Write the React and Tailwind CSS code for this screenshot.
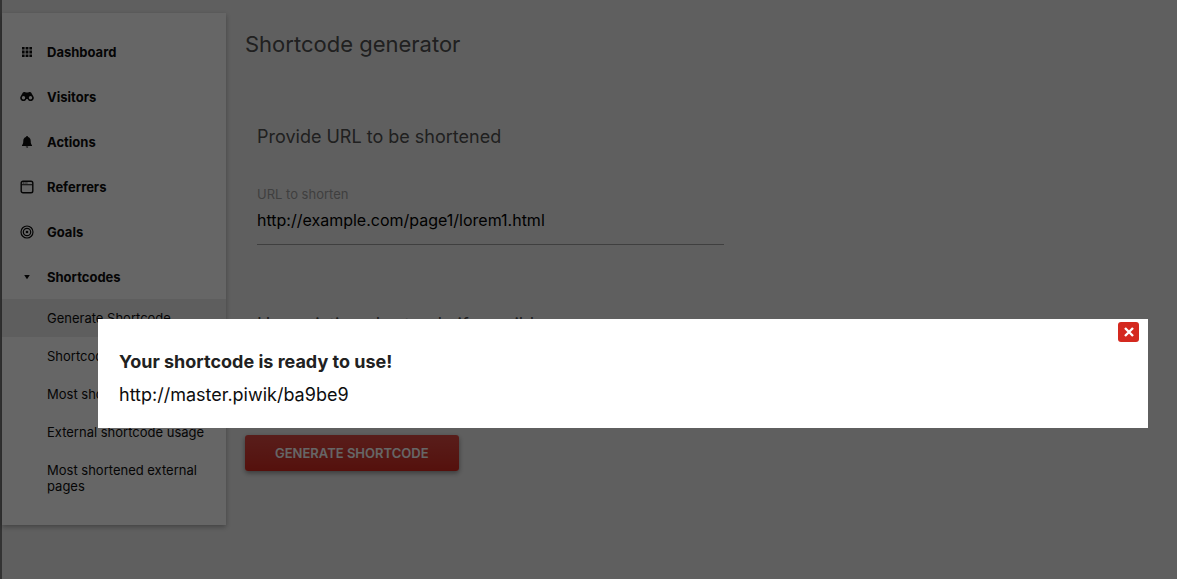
const items = [
  { label: 'Dashboard', icon: 'grid' },
  { label: 'Visitors', icon: 'binoculars' },
  { label: 'Actions', icon: 'bell' },
  { label: 'Referrers', icon: 'window' },
  { label: 'Goals', icon: 'target' },
  { label: 'Shortcodes', icon: 'caret' },
];

const subItems = [
  'Generate Shortcode',
  'Shortcodes list',
  'Most shortened pages',
  'External shortcode usage',
  'Most shortened external pages',
];

const shapes = {
  grid: (
    <path d="M2 2h2.6v2.6H2zM5.6 2h2.8v2.6H5.6zM9.4 2H12v2.6H9.4zM2 5.6h2.6v2.8H2zM5.6 5.6h2.8v2.8H5.6zM9.4 5.6H12v2.8H9.4zM2 9.4h2.6V12H2zM5.6 9.4h2.8V12H5.6zM9.4 9.4H12V12H9.4z" />
  ),
  binoculars: (
    <path
      fillRule="evenodd"
      d="M2.600 3C3.200 1.800 5.200 1.600 6 2.500h2c.8-.9 2.800-.7 3.400.5l1.700 2.900A3.200 3.200 0 1 1 7.600 9H6.400A3.200 3.200 0 1 1 .9 5.900zM3.500 6.100a1.700 1.700 0 1 0 0 3.400 1.700 1.700 0 0 0 0-3.400zM10.500 6.100a1.700 1.700 0 1 0 0 3.400 1.700 1.700 0 0 0 0-3.400z"
    />
  ),
  bell: (
    <path d="M7 1c.6 0 1 .4 1 .9 1.800.5 2.700 2 2.700 3.900 0 2.500.5 3.600 1.300 4.400v.8H2v-.8c.8-.8 1.300-1.900 1.300-4.400C3.300 3.900 4.200 2.400 6 1.900 6 1.400 6.400 1 7 1zM5.800 11.600h2.400c0 .8-.5 1.200-1.200 1.200s-1.200-.4-1.200-1.200z" />
  ),
  window: (
    <>
      <rect x="1.200" y="1.200" width="11.600" height="11.600" rx="1.800" fill="none" stroke="currentColor" strokeWidth="1.400" />
      <path d="M1.500 4.300h11v1h-11zM2.800 2.600h1v1h-1zM4.600 2.600h1v1h-1zM6.400 2.600h1v1h-1z" />
    </>
  ),
  target: (
    <>
      <g fill="none" stroke="currentColor" strokeWidth="1.200">
        <circle cx="7" cy="7" r="6" />
        <circle cx="7" cy="7" r="3.700" />
      </g>
      <circle cx="7" cy="7" r="1.300" />
    </>
  ),
  caret: <path d="M4.200 5h5.600L7 9.200z" />,
};

function Icon({ name }) {
  return (
    <svg viewBox="0 0 14 14" className="size-3.5 shrink-0" fill="currentColor" aria-hidden="true">
      {shapes[name]}
    </svg>
  );
}

function Sidebar() {
  return (
    <nav className="w-56 shrink-0 bg-white pt-4 pb-5 text-[13px] text-[#0d0d0d] shadow-[0_2px_5px_rgba(0,0,0,0.3)]">
      <ul>
        {items.map((item) => (
          <li key={item.label}>
            <a href="#" className="flex h-[45px] items-center gap-[13px] pl-[18px] font-bold">
              <Icon name={item.icon} />
              <span className="pt-0.5">{item.label}</span>
            </a>
          </li>
        ))}
      </ul>
      <ul>
        {subItems.map((label, i) => (
          <li key={label}>
            <a
              href="#"
              className={
                i === 0
                  ? 'block bg-[#ebebeb] py-[11px] pr-5 pl-[45px] leading-4'
                  : 'block py-[11px] pr-5 pl-[45px] leading-4'
              }
            >
              {label}
            </a>
          </li>
        ))}
      </ul>
    </nav>
  );
}

function Generator() {
  return (
    <main className="flex-1 pt-[15px]">
      <h1 className="text-[22px] leading-8 text-[#505050]">Shortcode generator</h1>
      <form className="mt-[65px]">
        <div className="max-w-[491px] px-3">
          <h2 className="text-lg leading-6 text-[#505050]">Provide URL to be shortened</h2>
          <label htmlFor="url" className="mt-[35px] block text-[13px] leading-5 text-[#9e9e9e]">
            URL to shorten
          </label>
          <input
            id="url"
            type="text"
            defaultValue="http://example.com/page1/lorem1.html"
            className="block h-[41px] w-full border-b border-[#9e9e9e] pb-[9px] text-base text-black outline-none"
          />
          <h2 className="mt-[68px] text-lg leading-6 text-[#505050]">Use existing shortcode if possible</h2>
        </div>
        <button
          type="button"
          className="mt-[98px] h-9 rounded-[3px] bg-linear-to-b from-[#dd4a43] to-[#d4291f] px-[30px] pt-0.5 text-[13px] font-semibold text-white shadow-[0_2px_5px_rgba(0,0,0,0.4)]"
        >
          GENERATE SHORTCODE
        </button>
      </form>
    </main>
  );
}

function ShortcodeDialog() {
  return (
    <div className="fixed inset-0 flex items-start bg-black/60 pt-[319px] pr-[29px] pl-[98px]">
      <section role="dialog" aria-labelledby="dialog-title" className="relative flex-1 bg-white px-[21px] pt-[31px] pb-5">
        <button
          type="button"
          aria-label="Close"
          className="absolute top-[3px] right-[9px] flex h-5 w-[21px] items-center justify-center rounded-[3px] bg-[#d4291f] text-white"
        >
          <svg viewBox="0 0 10 10" className="size-2.5" fill="none" stroke="currentColor" strokeWidth="2.400" aria-hidden="true">
            <path d="M1 1l8 8M9 1L1 9" />
          </svg>
        </button>
        <h2 id="dialog-title" className="text-lg leading-6 font-bold text-[#212121]">
          Your shortcode is ready to use!
        </h2>
        <p className="mt-[7px] text-lg leading-[27px] text-[#0d0d0d]">http://master.piwik/ba9be9</p>
      </section>
    </div>
  );
}

export default function App() {
  return (
    <div className="min-h-screen border-l-2 border-[#808080] bg-[#eee] font-[Inter,sans-serif]">
      <div className="flex items-start gap-[19px] pt-[13px]">
        <Sidebar />
        <Generator />
      </div>
      <ShortcodeDialog />
    </div>
  );
}
